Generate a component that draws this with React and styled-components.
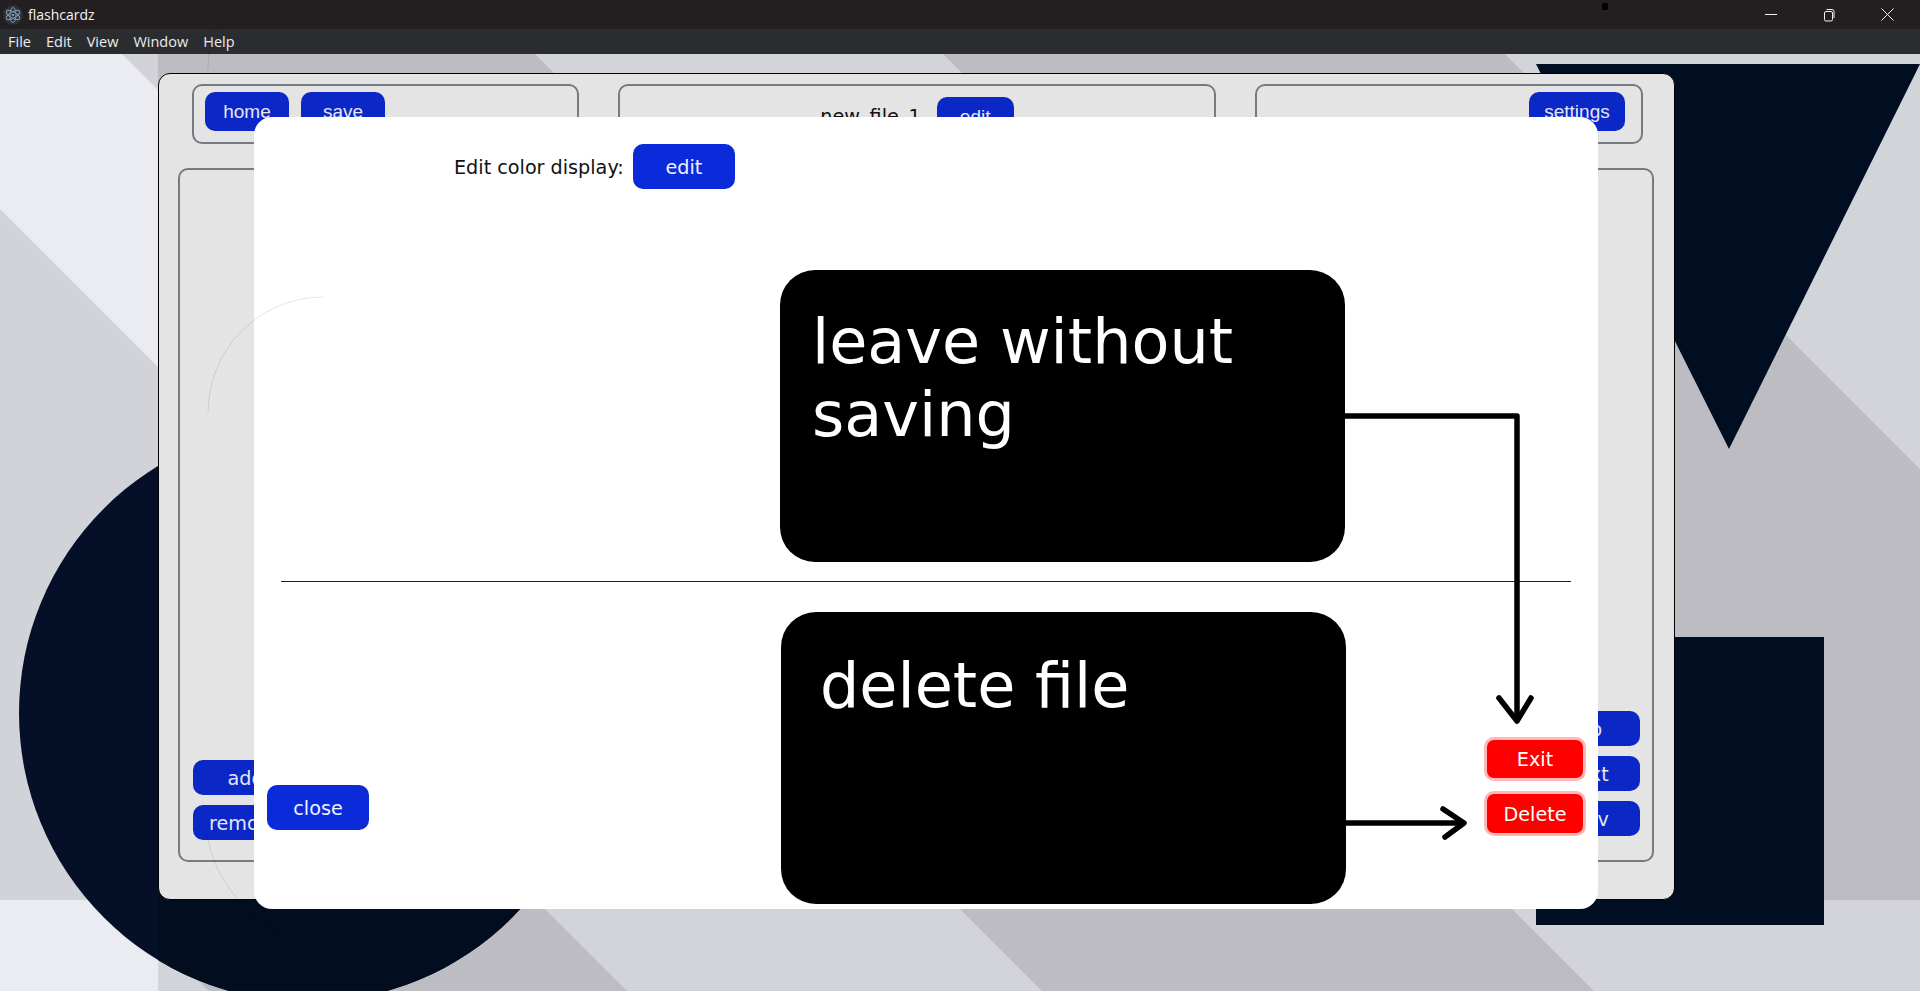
import React from 'react'
import styled, { createGlobalStyle } from 'styled-components'

const GlobalStyle = createGlobalStyle`
  html, body {
    margin: 0;
    padding: 0;
    height: 100%;
    overflow: hidden;
  }
  #root {
    height: 100%;
  }
  * {
    box-sizing: border-box;
  }
`

const Window = styled.div`
  position: relative;
  display: flex;
  flex-direction: column;
  width: 100vw;
  height: 100vh;
  overflow: hidden;
`

const TitleBar = styled.div`
  display: flex;
  align-items: center;
  height: 29px;
  padding-left: 3px;
  background: #231f20;
  color: #f2f2f2;
  font: 14px 'Open Sans', sans-serif;
`

const AppName = styled.span`
  margin-left: 5px;
`

const Notch = styled.div`
  width: 6px;
  height: 7px;
  margin-left: auto;
  margin-bottom: 16px;
  border-radius: 1px;
  background: #000;
`

const Controls = styled.div`
  display: flex;
  align-items: center;
  margin-left: 157px;
  padding-right: 26px;
  gap: 46px;
`

const MenuBar = styled.div`
  display: flex;
  align-items: center;
  height: 25px;
  padding-left: 8px;
  gap: 15px;
  background: #2b2c30;
  color: #ececec;
  font: 14.5px 'Open Sans', sans-serif;
`

const Stage = styled.div`
  position: relative;
  flex: 1;
  padding: 19px 245px 0 158px;
`

const Wallpaper = styled.svg`
  position: absolute;
  top: 0;
  left: 0;
  width: 100%;
  height: 100%;
`

const Panel = styled.div`
  position: relative;
  display: flex;
  flex-direction: column;
  gap: 24px;
  width: 1517px;
  height: 827px;
  padding: 10px 20px 0 19px;
  border: 1px solid #000;
  border-radius: 12px;
  background: #e4e4e4;
`

const TopRow = styled.div`
  display: flex;
  gap: 39px;
  padding: 0 0 0 14px;
`

const Frame = styled.div`
  display: flex;
  flex: none;
  align-items: flex-start;
  justify-content: ${props => props.$justify || 'flex-start'};
  gap: 12px;
  width: ${props => props.$width};
  height: 60px;
  padding: ${props => props.$pad};
  border: 2px solid #777a82;
  border-radius: 10px;
`

const FileName = styled.span`
  margin-top: 8px;
  margin-right: 4px;
  color: #111;
  font: 19.2px 'DejaVu Sans', sans-serif;
`

const WorkFrame = styled.div`
  display: flex;
  align-items: flex-end;
  justify-content: space-between;
  height: 694px;
  padding: 0 12px 0 13px;
  border: 2px solid #777a82;
  border-radius: 10px;
`

const ButtonStack = styled.div`
  display: flex;
  flex-direction: column;
  gap: ${props => props.$gap};
  padding-bottom: ${props => props.$bottom};
`

const TopButton = styled.div`
  display: flex;
  align-items: center;
  justify-content: center;
  width: ${props => props.$width};
  height: 39px;
  border-radius: 10px;
  background: #0b27c5;
  color: #e4e6f4;
  font: 19px 'Liberation Sans', sans-serif;
`

const SideButton = styled.div`
  display: flex;
  align-items: center;
  justify-content: center;
  width: 105px;
  height: 35px;
  padding-top: 1px;
  border-radius: 10px;
  background: #0b27c5;
  color: #e4e6f4;
  font: 19.2px 'DejaVu Sans', sans-serif;
`

const Modal = styled.div`
  position: absolute;
  top: 43px;
  left: 95px;
  display: grid;
  grid-template-columns: 526px 566px 1fr;
  grid-template-rows: 72px 373px 50px 292px;
  width: 1344px;
  height: 792px;
  border-radius: 18px;
  background: #fff;
  color: #111;
  font: 19.2px 'DejaVu Sans', sans-serif;
`

const ColorRow = styled.div`
  grid-column: 1 / -1;
  display: flex;
  align-items: center;
  gap: 9px;
  padding: 27px 0 0 200px;
`

const ColorLabel = styled.span`
  padding-top: 2px;
`

const ModalButton = styled.div`
  display: flex;
  align-items: center;
  justify-content: center;
  width: 102px;
  height: 45px;
  padding-top: 2px;
  border-radius: 10px;
  background: #0b2bdb;
  color: #f0f2ff;
`

const CardCell = styled.div`
  grid-column: 2;
  padding-top: ${props => props.$top};
  padding-left: ${props => props.$left};
`

const Card = styled.div`
  width: 565px;
  height: 292px;
  padding: ${props => props.$pad};
  border-radius: 35px;
  background: #000;
  color: #fff;
  font-size: 62px;
  line-height: 73px;
`

const Divider = styled.div`
  grid-column: 1 / -1;
  height: 1px;
  margin: 19px 27px 0;
  background: #222;
`

const CloseCell = styled.div`
  grid-column: 1;
  display: flex;
  align-items: flex-end;
  padding: 0 0 74px 13px;
`

const DangerCell = styled.div`
  grid-column: 3;
  display: flex;
  flex-direction: column;
  justify-content: flex-end;
  gap: 10px;
  padding: 0 0 68px 138px;
`

const DangerButton = styled.div`
  display: flex;
  align-items: center;
  justify-content: center;
  width: 102px;
  height: ${props => props.$height};
  padding-top: 1px;
  border: 3px solid #ffb6b6;
  border-radius: 10px;
  background: #f00;
  color: #fff;
`

const Arrows = styled.svg`
  position: absolute;
  top: 0;
  left: 0;
  width: 100%;
  height: 100%;
  pointer-events: none;
`

const FaintArcs = styled.svg`
  position: absolute;
  top: 0;
  left: 0;
  width: 100%;
  height: 100%;
  pointer-events: none;
`

const AppIcon = () =>
  <svg width='20' height='20' viewBox='0 0 20 20' fill='none'>
    <circle cx='10' cy='10' r='10' fill='#2c323c' />
    <g stroke='#7f9aa9' strokeWidth='1'>
      <ellipse cx='10' cy='10' rx='7.5' ry='3' transform='rotate(30 10 10)' />
      <ellipse cx='10' cy='10' rx='7.5' ry='3' transform='rotate(90 10 10)' />
      <ellipse cx='10' cy='10' rx='7.5' ry='3' transform='rotate(150 10 10)' />
    </g>
    <circle cx='10' cy='10' r='1.3' fill='#7f9aa9' />
  </svg>

const MinimizeIcon = () =>
  <svg width='12' height='12' viewBox='0 0 12 12' stroke='#f2f2f2' strokeWidth='1' fill='none'>
    <path d='M0 5.5H12' />
  </svg>

const RestoreIcon = () =>
  <svg width='12' height='14' viewBox='0 0 12 14' stroke='#f2f2f2' strokeWidth='1' fill='none'>
    <rect x='1.5' y='3.5' width='8' height='9.5' rx='1.5' />
    <path d='M3.5 1.5H9a2 2 0 0 1 2 2V10' />
  </svg>

const CloseIcon = () =>
  <svg width='13' height='13' viewBox='0 0 13 13' stroke='#f2f2f2' strokeWidth='1' fill='none'>
    <path d='M0.5 0.5L12.5 12.5M12.5 0.5L0.5 12.5' />
  </svg>

const WallpaperArt = () =>
  <Wallpaper viewBox='0 54 1920 937' preserveAspectRatio='none'>
    <defs>
      <clipPath id='rightOfEdge'>
        <rect x='158' y='54' width='1762' height='937' />
      </clipPath>
    </defs>
    <rect x='0' y='54' width='1920' height='937' fill='#d3d3da' />
    <rect x='0' y='54' width='158' height='846' fill='#d2d3d8' />
    <polygon points='0,54 122,54 158,90 158,367 0,209' fill='#ebecf1' />
    <rect x='0' y='900' width='158' height='91' fill='#ebecf1' />
    <rect x='158' y='54' width='1762' height='846' fill='#bdbcc2' />
    <polygon points='535,54 943,54 1100,211 692,211' fill='#d3d3da' />
    <polygon points='1505,54 1920,54 1920,469' fill='#d3d3da' />
    <polygon points='158,900 536,900 627,991 209,991 158,940' fill='#bdbcc2' />
    <polygon points='951,900 1503,900 1594,991 1042,991' fill='#bdbcc2' />
    <polygon points='1536,64 1920,64 1729,449' fill='#010e22' />
    <rect x='1536' y='637' width='288' height='288' fill='#010e22' />
    <circle cx='308' cy='713' r='289' fill='#051028' />
    <circle cx='308' cy='713' r='289' fill='#020d1f' clipPath='url(#rightOfEdge)' />
  </Wallpaper>

const App = () =>
  <Window>
    <GlobalStyle />
    <TitleBar>
      <AppIcon />
      <AppName>flashcardz</AppName>
      <Notch />
      <Controls>
        <MinimizeIcon />
        <RestoreIcon />
        <CloseIcon />
      </Controls>
    </TitleBar>
    <MenuBar>
      <span>File</span>
      <span>Edit</span>
      <span>View</span>
      <span>Window</span>
      <span>Help</span>
    </MenuBar>
    <Stage>
      <WallpaperArt />
      <Panel>
        <TopRow>
          <Frame $width='387px' $pad='6px 0 0 11px'>
            <TopButton $width='84px'>home</TopButton>
            <TopButton $width='84px'>save</TopButton>
          </Frame>
          <Frame $width='598px' $justify='center' $pad='11px 0 0 0'>
            <FileName>new_file_1</FileName>
            <TopButton $width='77px'>edit</TopButton>
          </Frame>
          <Frame $width='388px' $justify='flex-end' $pad='6px 16px 0 0'>
            <TopButton $width='96px'>settings</TopButton>
          </Frame>
        </TopRow>
        <WorkFrame>
          <ButtonStack $gap='10px' $bottom='20px'>
            <SideButton>add</SideButton>
            <SideButton>remove</SideButton>
          </ButtonStack>
          <ButtonStack $gap='10px' $bottom='24px'>
            <SideButton>flip</SideButton>
            <SideButton>next</SideButton>
            <SideButton>prev</SideButton>
          </ButtonStack>
        </WorkFrame>
        <Modal>
          <ColorRow>
            <ColorLabel>Edit color display:</ColorLabel>
            <ModalButton>edit</ModalButton>
          </ColorRow>
          <CardCell $top='81px' $left='0'>
            <Card $pad='35px 32px'>leave without saving</Card>
          </CardCell>
          <Divider />
          <CloseCell>
            <ModalButton>close</ModalButton>
          </CloseCell>
          <CardCell $top='0' $left='1px'>
            <Card $pad='37px 39px'>delete file</Card>
          </CardCell>
          <DangerCell>
            <DangerButton $height='44px'>Exit</DangerButton>
            <DangerButton $height='45px'>Delete</DangerButton>
          </DangerCell>
          <Arrows viewBox='0 0 1344 792' fill='none' stroke='#000' strokeWidth='5.5' strokeLinejoin='round' strokeLinecap='round'>
            <path d='M1091 299H1263V602' />
            <path d='M1245 581L1263 604L1277 581' />
            <path d='M1092 706H1208' />
            <path d='M1189 692L1210 706L1191 720' />
          </Arrows>
        </Modal>
      </Panel>
    </Stage>
    <FaintArcs viewBox='0 0 1920 991' fill='none' stroke='#000' strokeOpacity='0.1'>
      <path d='M208 413A115 116 0 0 1 323 297' />
      <path d='M207 833Q215 895 285 938' />
      <path d='M208 70C208 40 220 15 236 0' />
    </FaintArcs>
  </Window>

export default App
